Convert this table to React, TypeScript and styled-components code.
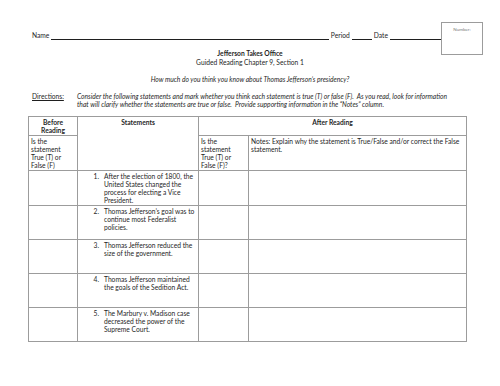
import React from 'react';
import styled, { createGlobalStyle } from 'styled-components';

const colours = {
  ink: '#1f1f1f',
  rule: '#9c9c9c',
  faint: '#6a6a6a',
};

const statements = [
  'After the election of 1800, the United States changed the process for electing a Vice President.',
  'Thomas Jefferson\u2019s goal was to continue most Federalist policies.',
  'Thomas Jefferson reduced the size of the government.',
  'Thomas Jefferson maintained the goals of the Sedition Act.',
  'The Marbury v. Madison case decreased the power of the Supreme Court.',
];

const GlobalStyle = createGlobalStyle`
  body {
    margin: 0;
    background: #fff;
    font-family: Lato, "Liberation Sans", sans-serif;
    color: ${colours.ink};
  }
`;

const App: React.FC = () => {
  return (
    <Page>
      <GlobalStyle />
      <HeaderRow>
        <Fields>
          <Label>Name</Label>
          <Blank grow />
          <Label>Period</Label>
          <Blank width={20} />
          <Label>Date</Label>
          <Blank width={51} />
        </Fields>
        <NumberBox>
          <NumberLabel>Number:</NumberLabel>
        </NumberBox>
      </HeaderRow>

      <Title>Jefferson Takes Office</Title>
      <Subtitle>Guided Reading Chapter 9, Section 1</Subtitle>
      <Question>How much do you think you know about Thomas Jefferson&rsquo;s presidency?</Question>

      <Directions>
        <DirLabel>Directions:</DirLabel>
        <DirText>
          Consider the following statements and mark whether you think each statement is true (T) or false (F).&nbsp; As you read, look for information
          that will clarify whether the statements are true or false.&nbsp; Provide supporting information in the &ldquo;Notes&rdquo; column.
        </DirText>
      </Directions>

      <Table>
        <colgroup>
          <col style={{ width: 49 }} />
          <col style={{ width: 121 }} />
          <col style={{ width: 50 }} />
          <col />
        </colgroup>
        <tbody>
          <tr>
            <HeadCell>Before<br />Reading</HeadCell>
            <HeadCell rowSpan={2}>Statements</HeadCell>
            <HeadCell colSpan={2}>After Reading</HeadCell>
          </tr>
          <TallRow>
            <Cell>Is the<br />statement<br />True (T) or<br />False (F)</Cell>
            <Cell>Is the<br />statement<br />True (T) or<br />False (F)?</Cell>
            <Cell>Notes: Explain why the statement is True/False and/or correct the False statement.</Cell>
          </TallRow>
          {statements.map((s, i) => (
            <TallRow key={i}>
              <Cell />
              <Cell>
                <Item>
                  <ItemNum>{i + 1}.</ItemNum>
                  <ItemText>{s}</ItemText>
                </Item>
              </Cell>
              <Cell />
              <Cell />
            </TallRow>
          ))}
        </tbody>
      </Table>
    </Page>
  );
};

const Page = styled.div`
  width: 500px;
  height: 386px;
  padding-top: 22px;
  box-sizing: border-box;
  font-size: 6.7px;
  line-height: 8px;
`;

const HeaderRow = styled.div`
  display: flex;
  align-items: flex-end;
  height: 33px;
  padding-left: 32px;
`;

const Fields = styled.div`
  display: flex;
  align-items: flex-end;
  width: 409px;
  height: 8px;
  margin-bottom: 16px;
`;

const Label = styled.span`
  padding: 0 2px;
  &:first-child {
    padding-left: 0;
  }
`;

const Blank = styled.span<{ width?: number; grow?: boolean }>`
  ${({ width }) => width && `width: ${width}px;`}
  ${({ grow }) => grow && `flex: 1;`}
  border-bottom: 1px solid ${colours.ink};
  margin-bottom: -1px;
`;

const NumberBox = styled.div`
  flex: none;
  align-self: stretch;
  width: 42px;
  border: 1px solid ${colours.rule};
  box-sizing: border-box;
  display: flex;
  justify-content: center;
  padding-top: 4px;
`;

const NumberLabel = styled.span`
  font-size: 4.5px;
  line-height: 5px;
  color: #777;
`;

const Title = styled.div`
  margin-top: -6px;
  text-align: center;
  font-weight: 700;
`;

const Subtitle = styled.div`
  text-align: center;
  margin-top: 1px;
`;

const Question = styled.div`
  margin-top: 9px;
  text-align: center;
  font-style: italic;
`;

const Directions = styled.div`
  display: flex;
  margin-top: 9px;
  padding-left: 32px;
`;

const DirLabel = styled.span`
  width: 45px;
  flex: none;
  text-decoration: underline;
  text-decoration-skip-ink: none;
`;

const DirText = styled.div`
  font-style: italic;
  width: 382px;
`;

const Table = styled.table`
  margin: 8px 0 0 28px;
  width: 439px;
  border-collapse: collapse;
  table-layout: fixed;
`;

const HeadCell = styled.td`
  border: 1px solid ${colours.rule};
  text-align: center;
  vertical-align: top;
  font-weight: 700;
  padding: 1px 2px;
  height: 16px;
`;

const TallRow = styled.tr`
  height: 34px;
`;

const Cell = styled.td`
  border: 1px solid ${colours.rule};
  vertical-align: top;
  padding: 1px 2px;
`;

const Item = styled.div`
  display: flex;
`;

const ItemNum = styled.span`
  width: 24px;
  flex: none;
  text-align: right;
  padding-right: 5px;
  box-sizing: border-box;
`;

const ItemText = styled.span`
  flex: 1;
`;

export default App;
